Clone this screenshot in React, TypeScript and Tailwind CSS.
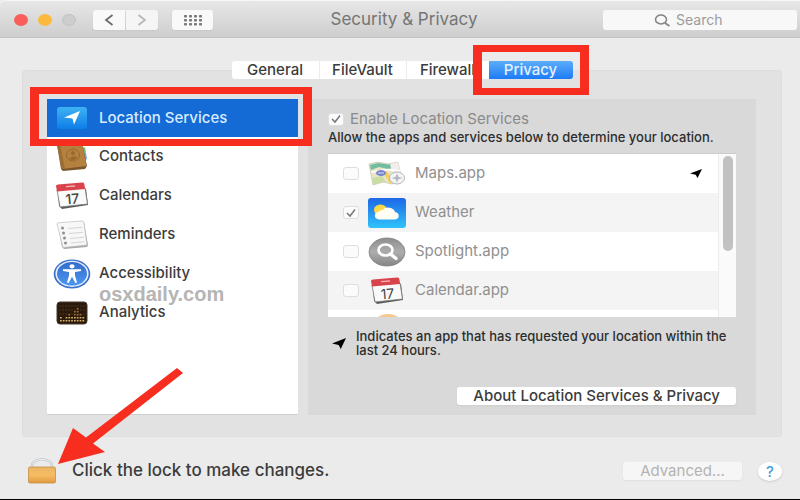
import { useState } from "react"
import type { ReactNode } from "react"

const TABS = [
    { name: "General", width: "w-[87px]", shape: "rounded-l-[3px]" },
    { name: "FileVault", width: "w-[87px]", shape: "border-l border-[#ececec]" },
    { name: "Firewall", width: "w-[83px]", shape: "border-l border-[#ececec]" },
    { name: "Privacy", width: "w-[84px]", shape: "rounded-r-[3px]" },
]

function LocationArrow({ className }: { className: string }) {
    return (
        <svg viewBox="0 0 20 16" preserveAspectRatio="none" className={className} fill="currentColor" aria-hidden="true">
            <path d="M20 0 L12.500 16 L9.500 10 L0 8 Z" />
        </svg>
    )
}

function LocationIcon() {
    return (
        <svg viewBox="0 0 32 28" className="h-7 w-8" aria-hidden="true">
            <defs>
                <linearGradient id="loc" x1="0" y1="0" x2="0" y2="1">
                    <stop offset="0" stopColor="#3fb2f4" />
                    <stop offset="1" stopColor="#0d7ee6" />
                </linearGradient>
            </defs>
            <rect x="1" y="3" width="30" height="22" rx="3" fill="url(#loc)" />
            <path d="M24 7 L18 20.500 L16.500 14.500 L8 13.500 Z" fill="#fff" />
        </svg>
    )
}

function ContactsIcon() {
    return (
        <svg viewBox="0 0 32 30" className="h-[30px] w-8" aria-hidden="true">
            <path d="M26 5 l3 .5 1 5 -2 1z" fill="#73b873" />
            <path d="M28 11 l2 0 1 6 -2 1z" fill="#6d9ed2" />
            <path d="M1 3 L26 1 L31 24 L29 27 L7 29 L5 27 Z" fill="#7b552b" />
            <path d="M1 2 L26 1 L30.500 24 L6 27 Z" fill="#b5813f" />
            <path d="M1 2 L4 2 L9 27 L6 27 Z" fill="#9d6e32" />
            <ellipse cx="17" cy="13" rx="6.500" ry="6" fill="none" stroke="#98692d" strokeWidth="1" />
            <circle cx="17" cy="11" r="2" fill="#98692d" />
            <path d="M13 17 q4 -5 8.500 -1 q-4 3.500 -8.500 1z" fill="#98692d" />
        </svg>
    )
}

function CalendarIcon() {
    return (
        <svg viewBox="0 0 34 28" className="h-7 w-[34px]" aria-hidden="true">
            <path d="M3 9 L31 7 L33 23 L7 27 L4 24 Z" fill="#5b5b5b" />
            <path d="M2 8 L30 6 L32.500 22 L5 25 Z" fill="#fafafa" stroke="#777" strokeWidth=".8" />
            <path d="M1 4 Q1 2.500 3 2.400 L27 .6 Q29 .5 29.300 2 L30.200 7 L2 9.500 Z" fill="#d9434b" />
            <path d="M11 4.600 L20 4" stroke="#f3b3b3" strokeWidth="1.400" />
            <text x="17.500" y="22" textAnchor="middle" transform="rotate(-5 17 17)" fontFamily="Inter, sans-serif" fontSize="14" fill="#444">17</text>
        </svg>
    )
}

function RemindersIcon() {
    return (
        <svg viewBox="0 0 32 30" className="h-[30px] w-8" aria-hidden="true">
            <path d="M2 5 L28 2 L32 25 L31 27 L8 29 L6 27 Z" fill="#a9a9a9" />
            <path d="M1 4 Q1 3 2 2.800 L26 1 Q27.500 1 27.800 2 L31 25 L7 27.500 Z" fill="#f7f7f7" stroke="#bdbdbd" strokeWidth=".7" />
            <path d="M12 8.500 L26 7.300 M13 13.500 L27 12.300 M14 18.500 L28 17.300 M14.500 23 L28.500 21.800" stroke="#cfcfcf" strokeWidth=".9" />
            <g fill="#8a9097">
                <circle cx="6.500" cy="8" r="1.500" />
                <circle cx="7.500" cy="13" r="1.500" />
                <circle cx="8.500" cy="18" r="1.500" />
                <circle cx="9.500" cy="23" r="1.500" />
            </g>
        </svg>
    )
}

function AccessibilityIcon() {
    return (
        <svg viewBox="0 0 38 30" className="h-[30px] w-[38px]" aria-hidden="true">
            <defs>
                <linearGradient id="acc" x1="0" y1="0" x2="0" y2="1">
                    <stop offset="0" stopColor="#346bc9" />
                    <stop offset="1" stopColor="#4c97f1" />
                </linearGradient>
            </defs>
            <ellipse cx="19" cy="15" rx="18.300" ry="14.600" fill="#3b70c8" />
            <ellipse cx="19" cy="14.800" rx="16.600" ry="13.100" fill="#e6f0ff" />
            <ellipse cx="19" cy="14.800" rx="15" ry="11.800" fill="url(#acc)" />
            <ellipse cx="19" cy="7.300" rx="2.500" ry="2.100" fill="#fff" />
            <path d="M10 10.200 L17 10.300 H21 L28 10.200 V12 L22 13 V16.500 L24 23.500 L22.300 24 L19 17.800 L15.700 24 L14 23.500 L16 16.500 V13 L10 12 Z" fill="#fff" />
        </svg>
    )
}

function AnalyticsIcon() {
    const bars = [2, 1, 2, 3, 2, 4, 5, 3, 2]
    return (
        <svg viewBox="0 0 32 24" className="h-6 w-8" aria-hidden="true">
            <rect x="1" y="1" width="30" height="22" rx="3" fill="#2a1a0d" stroke="#4a392a" strokeWidth="1" />
            <path d="M3 5 H29 M3 9 H29 M3 13 H29" stroke="#4e3315" strokeWidth="1" strokeDasharray="2 1" />
            {bars.map((n, col) =>
                Array.from({ length: n }, (_, row) => (
                    <rect key={`${col}-${row}`} x={4 + col * 2.8} y={19 - row * 3} width="1.700" height="1.500" fill={row > 1 ? "#9b7032" : "#dcb266"} />
                ))
            )}
        </svg>
    )
}

function MapsIcon() {
    return (
        <svg viewBox="0 0 38 26" className="h-[26px] w-[38px]" aria-hidden="true">
            <path d="M1 3 L10 1 L20 3 L30 1 L34 20 L24 23 L15 21 L5 24 Z" fill="#e9e6c8" stroke="#b8b8a4" strokeWidth=".6" />
            <path d="M2 4 L10 2 L20 3.500 L24 3 L25 7 L20 8 L11 6 L3 9 Z" fill="#71bda0" />
            <path d="M22 3 L30 1 L32 10 L24 11 Z" fill="#f4eded" />
            <path d="M4 17 L14 15 L18 21.500 L15 21 L5 24 Z" fill="#c9dda5" />
            <path d="M17 11 L24 22" stroke="#f6cf62" strokeWidth="4" />
            <path d="M3 11 L20 8.500 L32 10" stroke="#fff" strokeWidth="1.500" fill="none" />
            <ellipse cx="13" cy="12" rx="5" ry="3" fill="#7783cf" />
            <path d="M10 12 H16" stroke="#dfe2ff" strokeWidth="1" />
            <ellipse cx="29" cy="17" rx="7.500" ry="6" fill="#f2f3f4" stroke="#b5b8bb" strokeWidth="1" />
            <path d="M29 12.500 L31 17 L29 21.500 L27 17 Z M23.500 17 L29 15.500 L34.500 17 L29 18.500 Z" fill="#b3b6c2" />
        </svg>
    )
}

function WeatherIcon() {
    return (
        <svg viewBox="0 0 38 30" className="h-[30px] w-[38px]" aria-hidden="true">
            <defs>
                <linearGradient id="sky" x1="0" y1="0" x2="0" y2="1">
                    <stop offset="0" stopColor="#1e67e6" />
                    <stop offset="1" stopColor="#2fc3fa" />
                </linearGradient>
            </defs>
            <rect width="38" height="30" rx="3" fill="url(#sky)" />
            <ellipse cx="12.500" cy="12" rx="6.500" ry="5.500" fill="#fcd74b" />
            <path d="M11 21.500 a5 4 0 0 1 -.5 -7.800 a4.500 3.500 0 0 1 4 -1.800 a7 5.500 0 0 1 12.500 2 a4.800 3.900 0 0 1 0 7.600 Z" fill="#fffdf4" />
        </svg>
    )
}

function SpotlightIcon() {
    return (
        <svg viewBox="0 0 38 30" className="h-[30px] w-[38px]" aria-hidden="true">
            <defs>
                <linearGradient id="spot" x1="0" y1="0" x2="0" y2="1">
                    <stop offset="0" stopColor="#8e8e8e" />
                    <stop offset=".5" stopColor="#adadad" />
                    <stop offset="1" stopColor="#858585" />
                </linearGradient>
            </defs>
            <ellipse cx="19" cy="15" rx="18" ry="14" fill="url(#spot)" stroke="#7d7d7d" strokeWidth=".8" />
            <ellipse cx="17.500" cy="13" rx="7" ry="5.500" fill="none" stroke="#fff" strokeWidth="2.600" />
            <path d="M22.500 17 L28 21.500" stroke="#fff" strokeWidth="3.400" strokeLinecap="round" />
        </svg>
    )
}

function LockIcon() {
    return (
        <svg viewBox="0 0 28 26" className="h-[26px] w-7" aria-hidden="true">
            <defs>
                <linearGradient id="lock" x1="0" y1="0" x2="0" y2="1">
                    <stop offset="0" stopColor="#e9b465" />
                    <stop offset=".5" stopColor="#f6bd63" />
                    <stop offset="1" stopColor="#e09a3f" />
                </linearGradient>
            </defs>
            <path d="M4 10 V8 C4 -1 24 -1 24 8 V10" fill="none" stroke="#b5bbc0" strokeWidth="2.200" />
            <path d="M4 10 V8 C4 -1 24 -1 24 8 V10" fill="none" stroke="#eef1f3" strokeWidth="1.100" />
            <rect x=".5" y="9" width="27" height="16" rx="1.500" fill="url(#lock)" stroke="#bf8638" strokeWidth=".7" />
        </svg>
    )
}

const SERVICES: { name: string; icon: ReactNode }[] = [
    { name: "Location Services", icon: <LocationIcon /> },
    { name: "Contacts", icon: <ContactsIcon /> },
    { name: "Calendars", icon: <CalendarIcon /> },
    { name: "Reminders", icon: <RemindersIcon /> },
    { name: "Accessibility", icon: <AccessibilityIcon /> },
    { name: "Analytics", icon: <AnalyticsIcon /> },
]

const APPS: { name: string; icon: ReactNode; checked: boolean; recent: boolean }[] = [
    { name: "Maps.app", icon: <MapsIcon />, checked: false, recent: true },
    { name: "Weather", icon: <WeatherIcon />, checked: true, recent: false },
    { name: "Spotlight.app", icon: <SpotlightIcon />, checked: false, recent: false },
    { name: "Calendar.app", icon: <CalendarIcon />, checked: false, recent: false },
]

function Checkbox({ id, checked }: { id: string; checked: boolean }) {
    return (
        <span className="grid shrink-0 place-items-center">
            <input
                id={id}
                type="checkbox"
                defaultChecked={checked}
                disabled
                className="col-start-1 row-start-1 h-[13px] w-4 appearance-none rounded-[3px] border border-[#dedede] bg-[#fbfbfb]"
            />
            {checked && (
                <svg viewBox="0 0 12 10" className="col-start-1 row-start-1 h-2.5 w-3" fill="none" stroke="#777" strokeWidth="1.500" aria-hidden="true">
                    <path d="M2 5 L5 8 L10 1.500" />
                </svg>
            )}
        </span>
    )
}

function TitleBar() {
    return (
        <header className="flex h-[38px] items-center rounded-tl-md border-t border-b border-t-[#f6f6f6] border-b-[#c3c3c3] bg-linear-to-b from-[#e7e7e7] to-[#cecece] pt-[2px] pr-[3px] pl-3.5">
            <div className="flex gap-2.5">
                <button aria-label="Close" className="h-3 w-3.5 rounded-[50%] bg-[#f95e5b]" />
                <button aria-label="Minimize" className="h-3 w-3.5 rounded-[50%] bg-[#fbb93e]" />
                <button aria-label="Zoom" disabled className="h-3 w-3.5 rounded-[50%] border border-[#c2c2c2] bg-[#cdcdcd]" />
            </div>
            <div className="ml-[17px] flex gap-px">
                <button aria-label="Back" className="grid h-5 w-8 place-items-center rounded-l-[3px] bg-[#f9f9f9] shadow-xs">
                    <svg viewBox="0 0 10 12" className="h-3 w-2.5" fill="none" stroke="#686868" strokeWidth="1.700">
                        <path d="M8.500 1 L2 6 L8.500 11" />
                    </svg>
                </button>
                <button aria-label="Forward" disabled className="grid h-5 w-8 place-items-center rounded-r-[3px] bg-[#f5f5f5] shadow-xs">
                    <svg viewBox="0 0 10 12" className="h-3 w-2.5" fill="none" stroke="#b5b5b5" strokeWidth="1.600">
                        <path d="M1.500 1 L8 6 L1.500 11" />
                    </svg>
                </button>
            </div>
            <button aria-label="Show all" className="ml-3.5 grid h-5 w-[41px] place-items-center rounded-[3px] bg-[#f9f9f9] shadow-xs">
                <svg viewBox="0 0 20 11" className="h-[11px] w-5" fill="#7a7a7a">
                    {[0, 4, 8].map((y) => [1, 6, 11, 16].map((x) => <rect key={`${x}-${y}`} x={x} y={y} width="3" height="2.400" rx=".6" />))}
                </svg>
            </button>
            <h1 className="flex-1 pr-2 text-center text-[17px] text-[#757575]">Security &amp; Privacy</h1>
            <div className="relative">
                <svg viewBox="0 0 17 13" className="absolute top-1 left-[51px] h-[13px] w-[17px]" fill="none" stroke="#848484" aria-hidden="true">
                    <ellipse cx="7" cy="5.500" rx="5.500" ry="4.500" strokeWidth="1.500" />
                    <path d="M11 9 L15.500 12" strokeWidth="1.700" />
                </svg>
                <input
                    type="search"
                    aria-label="Search"
                    placeholder="Search"
                    className="block h-5 w-[194px] rounded-[3px] bg-[#f8f8f8] pl-[73px] text-sm text-[#555] outline-none placeholder:text-[#9b9b9b]"
                />
            </div>
        </header>
    )
}

export default function App() {
    const [tab, setTab] = useState("Privacy")
    const [service, setService] = useState("Location Services")

    return (
        <div className="flex min-h-screen flex-col border-b border-black bg-[#ebebeb] font-['Inter',sans-serif] text-[#3c3c3c]">
            <TitleBar />

            <main className="flex flex-1 flex-col pt-[23px] pr-[18px] pl-[22px]">
                <nav className="relative z-10 -mb-[9px] flex justify-center">
                    {TABS.map(({ name, width, shape }) => (
                        <div key={name} className={`relative ${width}`}>
                            <button
                                onClick={() => setTab(name)}
                                className={`block h-[18px] w-full text-[15px] leading-[18px] font-medium ${shape} ${
                                    tab === name ? "bg-linear-to-b from-[#5cadf9] to-[#1b7af5] text-[#e3f1ff]" : "bg-white"
                                }`}
                            >
                                {name}
                            </button>
                            {name === "Privacy" && (
                                <span className="pointer-events-none absolute -top-4 -right-4 -bottom-4 -left-4 border-x-9 border-y-7 border-[#f72d20]" />
                            )}
                        </div>
                    ))}
                </nav>

                <section className="flex gap-2.5 rounded-[3px] border border-[#dedede] bg-[#e2e2e2] pt-7 pr-[25px] pb-[21px] pl-6">
                    <div className="relative w-[251px] shrink-0 border-b border-[#cfcfcf] bg-white">
                        <ul>
                            {SERVICES.map(({ name, icon }) => (
                                <li key={name}>
                                    <button
                                        onClick={() => setService(name)}
                                        className={`flex w-full items-center gap-2 pl-1.5 text-left text-[15px] font-medium ${
                                            service === name ? "h-[38px] bg-[#146bd6] text-[#d9ebff]" : "h-[39px]"
                                        }`}
                                    >
                                        <span className="grid w-[38px] shrink-0 place-items-center">{icon}</span>
                                        {name}
                                    </button>
                                </li>
                            ))}
                        </ul>
                        <span className="pointer-events-none absolute -top-3 -right-3.5 -left-[17px] h-[59px] border-x-9 border-y-7 border-[#f72d20]" />
                        <span className="pointer-events-none absolute top-[185px] left-[52px] font-['Liberation_Sans',sans-serif] text-xl leading-5 font-bold text-[#b5b5b5]">
                            osxdaily.com
                        </span>
                    </div>

                    <div className="flex min-w-0 flex-1 flex-col bg-[#d9d9d9] px-5 py-2.5">
                        <label htmlFor="enable" className="flex h-5 items-center gap-1.5 text-[15px] text-[#8a8a8a]">
                            <Checkbox id="enable" checked />
                            Enable Location Services
                        </label>
                        <p className="text-[13px] leading-4 font-medium whitespace-nowrap text-[#2d2d2d]">
                            Allow the apps and services below to determine your location.
                        </p>

                        <div className="mt-2 flex h-[164px] overflow-hidden border-t border-[#cccccc] bg-white">
                            <ul className="flex-1">
                                {APPS.map((app) => (
                                    <li key={app.name} className="flex h-[39px] items-center pr-4 pl-[15px] even:bg-[#f4f4f4]">
                                        <Checkbox id={app.name} checked={app.checked} />
                                        <label htmlFor={app.name} className="ml-2 flex flex-1 items-center gap-2 text-[15px] text-[#909090]">
                                            <span className="grid w-10 place-items-center">{app.icon}</span>
                                            {app.name}
                                        </label>
                                        {app.recent && <LocationArrow className="h-[9px] w-3 text-black" />}
                                    </li>
                                ))}
                                <li className="pl-[45px]">
                                    <svg viewBox="0 0 30 24" className="h-6 w-[30px]" aria-hidden="true">
                                        <ellipse cx="15" cy="16" rx="15" ry="12" fill="#f3c98e" />
                                    </svg>
                                </li>
                            </ul>
                            <div className="w-[18px] border-l border-[#ececec] bg-[#fafafa] pt-[2px] pl-1">
                                <div className="h-[95px] w-2.5 rounded-[5px] bg-[#c1c1c1]" />
                            </div>
                        </div>

                        <div className="mt-3 flex items-center gap-2.5">
                            <LocationArrow className="ml-1 h-[11px] w-3.5 shrink-0 text-black" />
                            <p className="text-[13px] leading-[14px] font-medium text-[#2d2d2d]">
                                Indicates an app that has requested your location within the last 24 hours.
                            </p>
                        </div>

                        <button className="mt-[30px] h-[18px] self-end rounded-[3px] bg-white px-4 text-[15px] leading-[18px] font-medium shadow-xs">
                            About Location Services &amp; Privacy
                        </button>
                    </div>
                </section>

                <footer className="flex flex-1 items-center pt-1.5 pl-1.5">
                    <button className="relative flex items-center gap-4 text-[17px] font-medium">
                        <LockIcon />
                        Click the lock to make changes.
                        <svg viewBox="0 0 126 96" className="pointer-events-none absolute bottom-5 left-[30px] h-24 w-[126px]" fill="#f72d20" aria-hidden="true">
                            <path d="M0 96 L15 60 L28 69.500 L119 0 L125 5 L35 75.500 L47 84 Z" />
                        </svg>
                    </button>
                    <button disabled className="ml-auto h-[18px] w-[119px] rounded-[3px] bg-[#f6f6f6] text-[15px] leading-[18px] text-[#b3b3b3] shadow-xs">
                        Advanced...
                    </button>
                    <button aria-label="Help" className="ml-4 grid h-[19px] w-6 place-items-center rounded-[50%] bg-white text-[15px] leading-none font-medium text-[#4b9ad8] shadow-sm">
                        ?
                    </button>
                </footer>
            </main>
        </div>
    )
}
